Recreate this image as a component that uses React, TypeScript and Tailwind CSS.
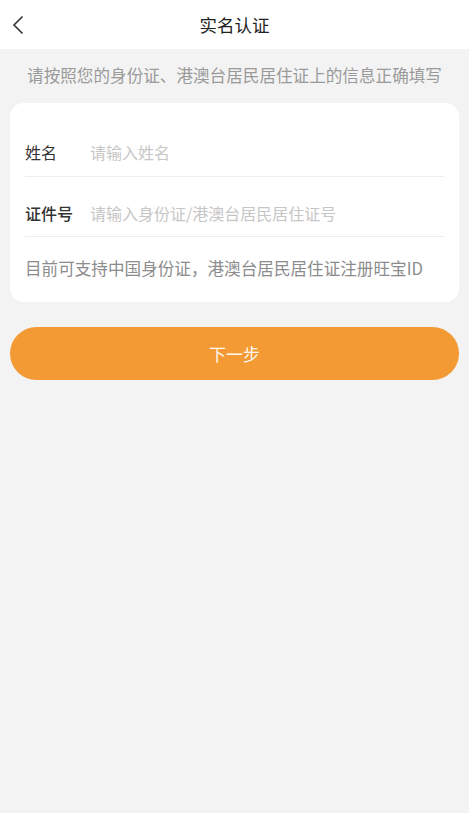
import { useState } from "react";

const font = { fontFamily: '"Noto Sans CJK SC", "Noto Sans", sans-serif' };

const App = () => {
  const [name, setName] = useState("");
  const [idNo, setIdNo] = useState("");

  return (
    <div className="min-h-[813px] w-full bg-[#f3f3f3]" style={font}>
      {/* 顶部导航 */}
      <div className="relative flex h-[49px] items-center justify-center bg-white">
        <button className="absolute left-[8px] top-[13px] flex h-[24px] w-[20px] items-center justify-center">
          <svg width="12" height="20" viewBox="0 0 12 20" fill="none">
            <path d="M10.5 1.5 2 10l8.5 8.5" stroke="#333" strokeWidth="1.6" strokeLinejoin="miter" />
          </svg>
        </button>
        <h1 className="text-[17.5px] leading-none text-[#222]">实名认证</h1>
      </div>

      {/* 提示 */}
      <p className="pt-[14px] text-center text-[16.6px] leading-[24px] text-[#9a9a9a]">
        请按照您的身份证、港澳台居民居住证上的信息正确填写
      </p>

      {/* 表单卡片 */}
      <div className="mx-[10px] mt-[16px] rounded-[14px] bg-white px-[15px] pt-[12px]">
        <div className="flex items-center border-b border-[#ececec] pb-[12px] pt-[25px]">
          <span className="w-[65px] text-[16px] leading-[24px] text-[#333]">姓名</span>
          <input
            value={name}
            onChange={(e) => setName(e.target.value)}
            placeholder="请输入姓名"
            className="flex-1 bg-transparent text-[16px] leading-[24px] text-[#333] outline-none placeholder:text-[#c6c6c6]"
          />
        </div>
        <div className="flex items-center border-b border-[#ececec] pb-[11px] pt-[24px]">
          <span className="w-[65px] text-[16px] font-medium leading-[24px] text-[#333]">证件号</span>
          <input
            value={idNo}
            onChange={(e) => setIdNo(e.target.value)}
            placeholder="请输入身份证/港澳台居民居住证号"
            className="flex-1 bg-transparent text-[16px] leading-[24px] text-[#333] outline-none placeholder:text-[#c6c6c6]"
          />
        </div>
        <p className="pb-[22px] pt-[19px] text-[16.6px] leading-[24px] text-[#8c8c8c]">
          目前可支持中国身份证，港澳台居民居住证注册旺宝ID
        </p>
      </div>

      {/* 下一步 */}
      <div className="px-[10px] pt-[25px]">
        <button className="flex h-[53px] w-full items-center justify-center rounded-full bg-[#f49a34] text-[17px] text-[#fff8ec]">
          下一步
        </button>
      </div>
    </div>
  );
};

export default App;
